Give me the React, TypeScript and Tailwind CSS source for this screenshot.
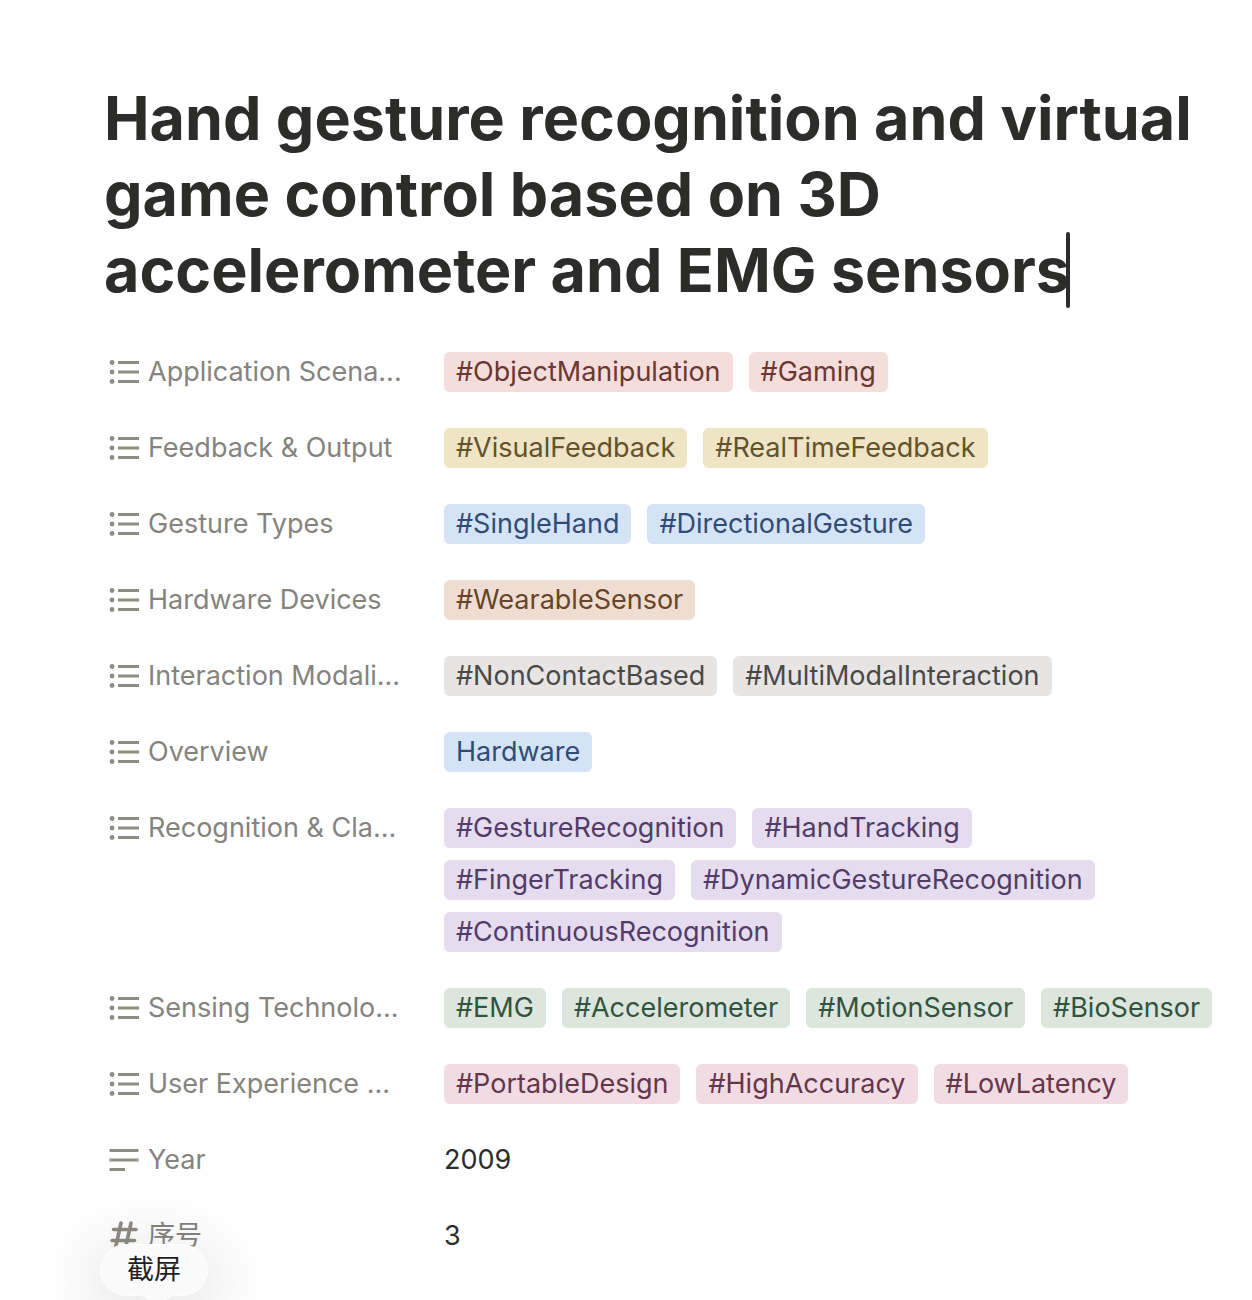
import React from "react";

type Kind = "list" | "text" | "number";
type Row = { label: string; kind: Kind; tags?: string[]; value?: string; color?: string; hint?: string };

const rows: Row[] = [
  { label: "Application Scena...", kind: "list", tags: ["#ObjectManipulation", "#Gaming"], color: "bg-[#f5dddb] text-[#6a3733]" },
  { label: "Feedback & Output", kind: "list", tags: ["#VisualFeedback", "#RealTimeFeedback"], color: "bg-[#efe4c4] text-[#63522b]" },
  { label: "Gesture Types", kind: "list", tags: ["#SingleHand", "#DirectionalGesture"], color: "bg-[#d5e3f6] text-[#304c74]" },
  { label: "Hardware Devices", kind: "list", tags: ["#WearableSensor"], color: "bg-[#f0ddd1] text-[#66452a]" },
  { label: "Interaction Modali...", kind: "list", tags: ["#NonContactBased", "#MultiModalInteraction"], color: "bg-[#e6e5e3] text-[#4a4946]" },
  { label: "Overview", kind: "list", tags: ["Hardware"], color: "bg-[#d5e3f6] text-[#304c74]" },
  { label: "Recognition & Cla...", kind: "list", tags: ["#GestureRecognition", "#HandTracking", "#FingerTracking", "#DynamicGestureRecognition", "#ContinuousRecognition"], color: "bg-[#e6dcef] text-[#523c68]" },
  { label: "Sensing Technolo...", kind: "list", tags: ["#EMG", "#Accelerometer", "#MotionSensor", "#BioSensor"], color: "bg-[#dce6dd] text-[#325340]" },
  { label: "User Experience ...", kind: "list", tags: ["#PortableDesign", "#HighAccuracy", "#LowLatency"], color: "bg-[#f2dce3] text-[#64364b]" },
  { label: "Year", kind: "text", value: "2009" },
  { label: "序号", kind: "number", value: "3", hint: "截屏" },
];

function Icon({ kind }: { kind: Kind }) {
  return (
    <svg className="h-8 w-8 shrink-0 text-[#8e8b82]" viewBox="0 0 32 32" fill="none" stroke="currentColor" strokeWidth="3.200" aria-hidden="true">
      {kind === "list" && (
        <>
          <path d="M10 6.500H31M10 16H31M10 25.500H31" />
          <g fill="currentColor" stroke="none">
            <circle cx="4" cy="6.500" r="2.400" />
            <circle cx="4" cy="16" r="2.400" />
            <circle cx="4" cy="25.500" r="2.400" />
          </g>
        </>
      )}
      {kind === "text" && <path d="M1.500 6.500H30.500M1.500 16H30.500M1.500 25.500H17" />}
      {kind === "number" && <path strokeWidth="3.600" strokeLinecap="round" d="M13 3L7.500 28M23 3L17.500 28M5.500 9.500H28M4 20.500H26.500" />}
    </svg>
  );
}

function Hint({ text }: { text: string }) {
  return (
    <span
      role="tooltip"
      className="absolute top-7 -left-1 flex h-[52px] w-[108px] items-center justify-center rounded-full border border-white bg-[#fbfbfb] text-[#1e1e1e] shadow-[0_12px_64px_16px_rgba(0,0,0,0.09)]"
    >
      {text}
      <svg className="absolute top-[50px] left-9 h-3 w-10" viewBox="0 0 40 12" aria-hidden="true">
        <path d="M0 0C8 0 10 7 20 12C30 7 32 0 40 0Z" fill="#fbfbfb" />
      </svg>
    </span>
  );
}

export default function App() {
  return (
    <main className="min-h-screen overflow-hidden bg-white pt-20 pr-9 pl-[104px] font-['Inter','Noto_Sans_CJK_SC',sans-serif] text-[27px] leading-10 text-[#2c2c2b]">
      <h1 className="text-[61px] leading-[76px] font-bold">
        Hand gesture recognition and virtual game control based on 3D accelerometer and EMG sensors
        <span className="absolute -ml-1 h-[76px] w-1 rounded-full bg-[#2c2c2b]" />
      </h1>
      <dl className="mt-11 flex flex-col gap-9">
        {rows.map((row) => (
          <div key={row.label} className="flex">
            <dt className="relative flex h-10 w-[340px] shrink-0 items-center gap-2 pl-1 text-[#85837e]">
              <Icon kind={row.kind} />
              <span className="whitespace-nowrap">{row.label}</span>
              {row.hint && <Hint text={row.hint} />}
            </dt>
            <dd className="flex min-w-0 flex-wrap gap-x-4 gap-y-3">
              {row.tags?.map((tag) => (
                <span key={tag} className={`rounded-md px-3 whitespace-nowrap ${row.color}`}>{tag}</span>
              ))}
              {row.value}
            </dd>
          </div>
        ))}
      </dl>
    </main>
  );
}
